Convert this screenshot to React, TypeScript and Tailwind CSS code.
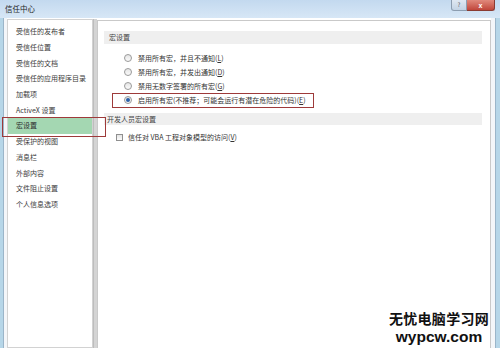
import React from "react";

const cjk = { fontFamily: '"Noto Sans CJK SC", "Noto Sans", sans-serif' };

const navItems = [
  "受信任的发布者",
  "受信任位置",
  "受信任的文档",
  "受信任的应用程序目录",
  "加载项",
  "ActiveX 设置",
  "宏设置",
  "受保护的视图",
  "消息栏",
  "外部内容",
  "文件阻止设置",
  "个人信息选项",
];

function Radio({ checked }: { checked?: boolean }) {
  return (
    <span className="w-[8px] h-[8px] rounded-full border border-[#9a9a9a] bg-gradient-to-b from-[#e6e6e6] to-[#fafafa] flex items-center justify-center shrink-0">
      {checked && <span className="w-[4px] h-[4px] rounded-full bg-[#2b5fa8]" />}
    </span>
  );
}

function RadioRow({ pre, key_, checked }: { pre: string; key_: string; checked?: boolean }) {
  return (
    <div className="h-[14px] flex items-center pl-[20px] gap-[6px]">
      <Radio checked={checked} />
      <span className="text-[7px] leading-none text-[#333] whitespace-nowrap">
        {pre}(<span className="underline">{key_}</span>)
      </span>
    </div>
  );
}

export default function App() {
  return (
    <div className="w-[500px] h-[348px] bg-white relative overflow-hidden" style={cjk}>
      {/* Title bar */}
      <div className="h-[18px] bg-gradient-to-b from-[#c3d9ef] to-[#d7e7f6] flex items-start justify-between">
        <span className="text-[7.5px] leading-none text-[#1e1e1e] pl-[5px] pt-[5px]">信任中心</span>
        <div className="flex pr-[5px]">
          <div className="w-[16px] h-[11px] rounded-bl-[3px] border border-t-0 border-[#8c9db0] bg-gradient-to-b from-[#dfe8f2] to-[#c3d3e4] flex items-center justify-center text-[6px] text-[#555] leading-none">?</div>
          <div className="w-[28px] h-[11px] rounded-br-[3px] border border-t-0 border-l-0 border-[#8a3b32] bg-gradient-to-b from-[#e0897c] to-[#c0453a] flex items-center justify-center text-[7px] font-bold text-white leading-none" style={{ fontFamily: '"Liberation Sans", sans-serif' }}>x</div>
        </div>
      </div>

      {/* Body */}
      <div className="flex h-[330px]">
        <div className="w-[3px] bg-[#b6d6e8]" />
        <div className="w-px bg-[#9bb5c9]" />
        <div className="w-[3px] bg-[#f3f6f9]" />

        {/* Nav panel */}
        <div className="w-[86px] mt-[1px] border border-[#d2d2d2] bg-white pt-[4px]">
          {navItems.map((t, i) => (
            <div
              key={t}
              className={
                "h-[15.7px] flex items-center pl-[8px] text-[7px] leading-none whitespace-nowrap " +
                (i === 6 ? "bg-[#a4d7b2] text-[#2d2d2d]" : "text-[#3c3c3c]")
              }
            >
              {t}
            </div>
          ))}
        </div>

        <div className="w-[4px] mt-[1px] bg-[#d4d4d4] border-l border-[#bdbdbd]" />

        {/* Content panel */}
        <div className="w-[394px] mt-[2px] border-t border-l border-r border-[#c9c9c9] bg-white pl-[6px] pr-[8px] pt-[10px]">
          <div className="h-[13px] bg-[#efefef] flex items-center pl-[5px] text-[7px] leading-none text-[#444]">宏设置</div>
          <div className="mt-[7px]">
            <RadioRow pre="禁用所有宏，并且不通知" key_="L" />
            <RadioRow pre="禁用所有宏，并发出通知" key_="D" />
            <RadioRow pre="禁用无数字签署的所有宏" key_="G" />
            <RadioRow pre="启用所有宏(不推荐；可能会运行有潜在危险的代码)" key_="E" checked />
          </div>
          <div className="mt-[6px] h-[12px] bg-[#efefef] flex items-center pl-[3px] text-[7px] leading-none text-[#444]">开发人员宏设置</div>
          <div className="mt-[5px] h-[14px] flex items-center pl-[12px] gap-[5px]">
            <span className="w-[7px] h-[7px] border border-[#8f8f8f] bg-gradient-to-b from-[#e4e4e4] to-[#fbfbfb] shrink-0" />
            <span className="text-[7px] leading-none text-[#333] whitespace-nowrap">
              信任对 VBA 工程对象模型的访问(<span className="underline">V</span>)
            </span>
          </div>
        </div>

        <div className="w-[4px] bg-[#f3f6f9]" />
        <div className="w-px bg-[#9bb5c9]" />
        <div className="flex-1 bg-[#b6d6e8]" />
      </div>

      {/* Red highlight boxes */}
      <div className="absolute left-[2px] top-[117px] w-[104px] h-[20px] border border-[#9e3a3a]" />
      <div className="absolute left-[112px] top-[93px] w-[202px] h-[15px] border border-[#9e3a3a]" />

      {/* Watermark */}
      <div className="absolute left-[389px] top-[310px] w-[100px] flex flex-col items-center text-[#111]">
        <span className="h-[17px] text-[14px] leading-[17px] font-bold tracking-[0.3px] whitespace-nowrap" style={cjk}>无忧电脑学习网</span>
        <span className="mt-[2px] h-[15px] text-[15.5px] leading-[15px] font-bold whitespace-nowrap" style={{ fontFamily: '"Liberation Sans", Arial, sans-serif' }}>wypcw.com</span>
      </div>
    </div>
  );
}
